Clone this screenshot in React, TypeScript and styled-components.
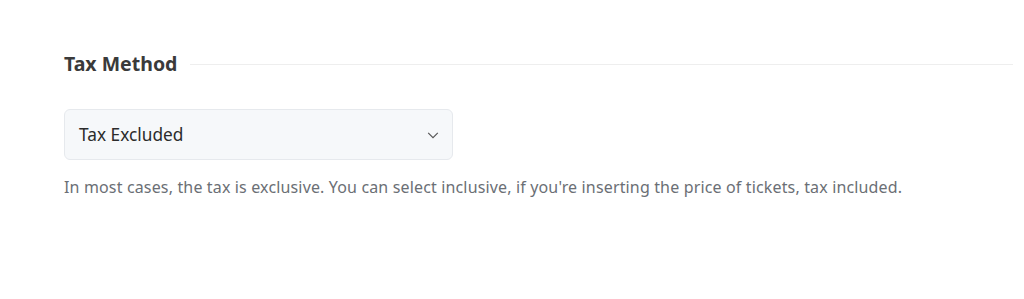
import * as React from 'react';
import styled, { createGlobalStyle } from 'styled-components';

const GlobalStyle = createGlobalStyle`
  body {
    margin: 0;
    background: #ffffff;
    font-family: "Noto Sans", "Open Sans", sans-serif;
  }
`;

const Section = styled.section`
  padding: 52px 11px 0 64px;
`;

const Heading = styled.div`
  display: flex;
  align-items: center;
  gap: 13px;
  margin-bottom: 33px;
`;

const Title = styled.h3`
  margin: 0;
  font-size: 19.5px;
  font-weight: 700;
  color: #3a3a3a;
  line-height: 24px;
  white-space: nowrap;
`;

const Rule = styled.div`
  flex: 1;
  height: 1px;
  background: #eeeeee;
`;

const SelectBox = styled.div`
  width: 389px;
  height: 51px;
  box-sizing: border-box;
  display: flex;
  align-items: center;
  justify-content: space-between;
  padding: 0 12px 0 14px;
  background: #f6f8fa;
  border: 1px solid #e6e9ed;
  border-radius: 6px;
  font-size: 17.3px;
  color: #2b2b2b;
`;

const Chevron = styled.svg`
  width: 14px;
  height: 14px;
  color: #555;
`;

const Help = styled.p`
  margin: 16px 0 0;
  font-size: 16px;
  letter-spacing: 0.15px;
  line-height: 22px;
  color: #6b6f75;
`;

export default function App(): JSX.Element {
  return (
    <>
      <GlobalStyle />
      <Section>
        <Heading>
          <Title>Tax Method</Title>
          <Rule />
        </Heading>
        <SelectBox>
          <span>Tax Excluded</span>
          <Chevron viewBox="0 0 16 16" fill="none" stroke="currentColor" strokeWidth="1.3">
            <path d="M2.5 5.5L8 11l5.5-5.5" />
          </Chevron>
        </SelectBox>
        <Help>
          In most cases, the tax is exclusive. You can select inclusive, if you're inserting the price of tickets, tax included.
        </Help>
      </Section>
    </>
  );
}
